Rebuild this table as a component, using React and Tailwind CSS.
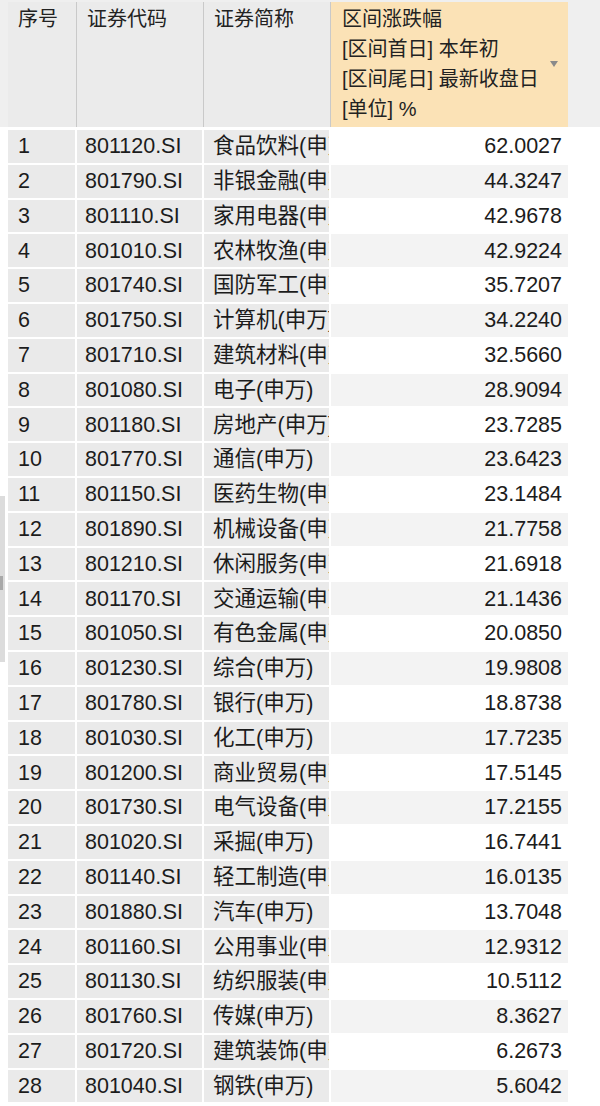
import React from "react";

const rows = [
  ["801120.SI", "食品饮料(申万)", "62.0027"],
  ["801790.SI", "非银金融(申万)", "44.3247"],
  ["801110.SI", "家用电器(申万)", "42.9678"],
  ["801010.SI", "农林牧渔(申万)", "42.9224"],
  ["801740.SI", "国防军工(申万)", "35.7207"],
  ["801750.SI", "计算机(申万)", "34.2240"],
  ["801710.SI", "建筑材料(申万)", "32.5660"],
  ["801080.SI", "电子(申万)", "28.9094"],
  ["801180.SI", "房地产(申万)", "23.7285"],
  ["801770.SI", "通信(申万)", "23.6423"],
  ["801150.SI", "医药生物(申万)", "23.1484"],
  ["801890.SI", "机械设备(申万)", "21.7758"],
  ["801210.SI", "休闲服务(申万)", "21.6918"],
  ["801170.SI", "交通运输(申万)", "21.1436"],
  ["801050.SI", "有色金属(申万)", "20.0850"],
  ["801230.SI", "综合(申万)", "19.9808"],
  ["801780.SI", "银行(申万)", "18.8738"],
  ["801030.SI", "化工(申万)", "17.7235"],
  ["801200.SI", "商业贸易(申万)", "17.5145"],
  ["801730.SI", "电气设备(申万)", "17.2155"],
  ["801020.SI", "采掘(申万)", "16.7441"],
  ["801140.SI", "轻工制造(申万)", "16.0135"],
  ["801880.SI", "汽车(申万)", "13.7048"],
  ["801160.SI", "公用事业(申万)", "12.9312"],
  ["801130.SI", "纺织服装(申万)", "10.5112"],
  ["801760.SI", "传媒(申万)", "8.3627"],
  ["801720.SI", "建筑装饰(申万)", "6.2673"],
  ["801040.SI", "钢铁(申万)", "5.6042"],
];

const font = {
  fontFamily: '"Liberation Sans", "Noto Sans CJK SC", sans-serif',
};

export default function App() {
  return (
    <div
      className="relative w-[600px] h-[1106px] overflow-hidden bg-white text-[#1c1c1c]"
      style={font}
    >
      {/* left scroll strip */}
      <div className="absolute left-0 top-[496px] w-[5px] h-[166px] bg-[#dcdcdc]">
        <div className="mt-[80px] w-[3px] h-[14px] bg-[#a9a9a9]" />
      </div>

      {/* header */}
      <div className="flex h-[127px] pt-[2px] bg-[#efefef] text-[20px] leading-[30px] text-[#222]">
        <div className="w-[8px]" />
        <div className="w-[69px] bg-[#ebebeb] border-r-[1.5px] border-[#c9c9c9] pl-[10px] pt-[2px]">
          序号
        </div>
        <div className="w-[127px] bg-[#ebebeb] border-r-[1.5px] border-[#c9c9c9] pl-[10px] pt-[2px]">
          证券代码
        </div>
        <div className="w-[127px] bg-[#ebebeb] border-r-[1.5px] border-[#c9c9c9] pl-[10px] pt-[2px]">
          证券简称
        </div>
        <div className="relative w-[237px] bg-[#fbe2b6] pl-[11px] pt-[2px]">
          <div>区间涨跌幅</div>
          <div>[区间首日] 本年初</div>
          <div>[区间尾日] 最新收盘日</div>
          <div>[单位] %</div>
          <div className="absolute right-[10px] top-[59px] w-0 h-0 border-l-[4px] border-r-[4px] border-t-[6px] border-l-transparent border-r-transparent border-t-[#8a8a8a]" />
        </div>
      </div>

      {/* body */}
      <div className="flex flex-col pt-[1px]">
        {rows.map((r, i) => (
          <div key={r[0]} className="flex h-[34.8px] text-[21.5px]">
            <div className="w-[8px]" />
            <div className="flex items-center w-[69px] h-full bg-[#eaeaea] border-t-2 border-r-2 border-white pl-[10px]">
              {i + 1}
            </div>
            <div className="flex items-center w-[127px] h-full bg-[#eaeaea] border-t-2 border-r-2 border-white pl-[8px]">
              {r[0]}
            </div>
            <div className="flex items-center w-[127px] h-full bg-[#eaeaea] border-t-2 border-r-2 border-white pl-[9px] overflow-hidden whitespace-nowrap">
              {r[1]}
            </div>
            <div
              className={
                "flex items-center justify-end w-[237px] h-full border-t-2 border-white pr-[6px] " +
                (i % 2 === 1 ? "bg-[#f3f3f3]" : "bg-white")
              }
            >
              {r[2]}
            </div>
          </div>
        ))}
      </div>
    </div>
  );
}
